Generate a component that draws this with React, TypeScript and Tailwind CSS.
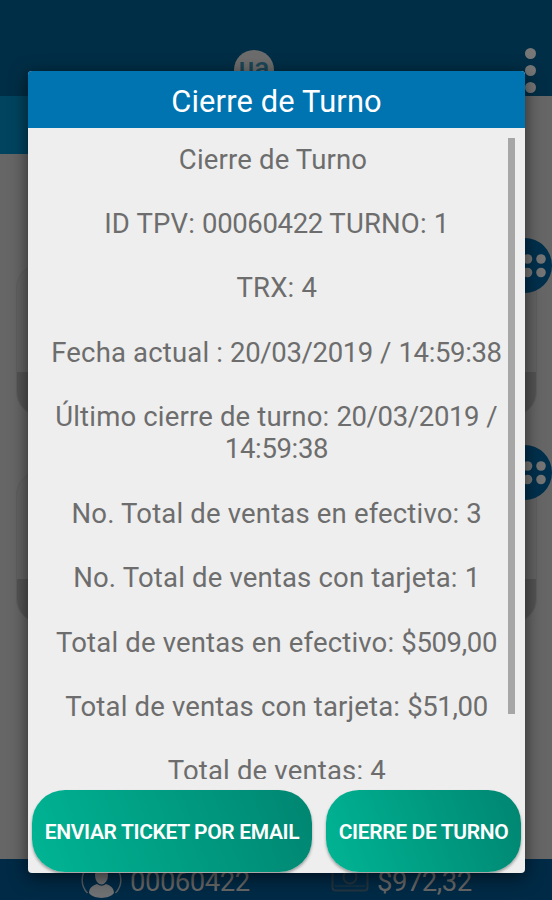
const lines = [
  "Cierre de Turno",
  "ID TPV: 00060422 TURNO: 1",
  "TRX: 4",
  "Fecha actual : 20/03/2019 / 14:59:38",
  "Último cierre de turno: 20/03/2019 / 14:59:38",
  "No. Total de ventas en efectivo: 3",
  "No. Total de ventas con tarjeta: 1",
  "Total de ventas en efectivo: $509,00",
  "Total de ventas con tarjeta: $51,00",
  "Total de ventas: 4",
];

// numbers are set a little tighter than the words around them
function Line({ text }: { text: string }) {
  return (
    <p className="tracking-[0.17px] first:-ml-[7px]">
      {text.split(/([$\d][\d/:,]*)/).map((part, i) =>
        i % 2 === 1 ? (
          <span key={i} className="tracking-[-0.35px]">
            {part}
          </span>
        ) : (
          part
        )
      )}
    </p>
  );
}

function Header() {
  return (
    <header className="relative h-24 shrink-0 bg-[#002e46]">
      <div className="absolute left-[234px] top-[50px] flex h-10 w-10 justify-center rounded-full bg-[#6c6c6c] pt-[4px] text-[28px] font-medium leading-[28px] text-[#1b4657]">
        ua
      </div>
      <div className="absolute right-[16px] top-[47.5px] flex flex-col gap-[5.5px]">
        <span className="h-[11.5px] w-[11.5px] rounded-full bg-[#777]" />
        <span className="h-[11.5px] w-[11.5px] rounded-full bg-[#777]" />
        <span className="h-[11.5px] w-[11.5px] rounded-full bg-[#777]" />
      </div>
    </header>
  );
}

function Card() {
  return (
    <div className="relative ml-4 mr-[15px] h-[152px]">
      <div className="flex h-full flex-col overflow-hidden rounded-[24px] border border-[#5f5f5f] bg-[#636363]">
        <div className="flex-1" />
        <div className="h-[43px] bg-[#545454]" />
      </div>
      <svg className="absolute -right-[15px] -top-[26px]" width="55" height="55" viewBox="0 0 55 55">
        <circle cx="27.5" cy="27.5" r="27.5" fill="#00304d" />
        <g fill="#757575">
          <circle cx="30.5" cy="21" r="4.8" />
          <circle cx="30.5" cy="34.5" r="4.8" />
          <circle cx="44" cy="21" r="4.8" />
          <circle cx="44" cy="34.5" r="4.8" />
        </g>
      </svg>
    </div>
  );
}

function Footer() {
  return (
    <footer className="flex h-[41px] shrink-0 items-end bg-[#002a46] text-[27.5px] leading-[32px] tracking-[-0.5px] text-[#666]">
      <svg className="ml-[81px] shrink-0" width="41" height="41" viewBox="0 0 41 41">
        <path d="M6.500 9a18.500 18.500 0 0 0 0 26M34.500 9a18.500 18.500 0 0 1 0 26" transform="translate(0 -1)" fill="none" stroke="#555d63" strokeWidth="1.5" />
        <ellipse cx="20.5" cy="16" rx="6.500" ry="9.500" fill="#707173" />
        <path d="M8 34c0-6 5-8 8-9q4.500 3.500 9 0c3 1 8 3 8 9-5 6.500-20 6.500-25 0z" fill="#707173" />
      </svg>
      <span className="mb-[2px] ml-[8px] w-[120px]">00060422</span>
      <svg className="mb-[7px] ml-[81px] shrink-0" width="38" height="26" viewBox="0 0 38 26" fill="none" stroke="#24343f" strokeWidth="2">
        <rect x="1.500" y="1.500" width="35" height="22" rx="3" />
        <circle cx="19" cy="10" r="6.500" />
        <path d="M4 19h30" strokeWidth="1" />
      </svg>
      <span className="mb-[2px] ml-[8px]">$972,32</span>
    </footer>
  );
}

function TurnoDialog() {
  return (
    <div className="absolute left-7 top-[71px] flex h-[802px] w-[497px] flex-col overflow-hidden rounded-[4px] bg-[#eee] shadow-[0_4px_18px_rgba(0,0,0,0.6)]">
      <h1 className="h-[56.5px] shrink-0 bg-[#0073b1] pt-[13px] text-center text-[30.8px] leading-[36px] tracking-[0.17px] text-white">
        Cierre de Turno
      </h1>
      <div className="relative mt-[10.5px] h-[641px] overflow-hidden pt-[5.6px]">
        <div className="flex flex-col gap-[32.2px] px-5 text-center text-[27.5px] leading-[32.2px] text-[#6d6d6d]">
          {lines.map((line) => (
            <Line key={line} text={line} />
          ))}
        </div>
        <div className="absolute right-[10px] top-0 h-[576px] w-[7px] bg-[#a6a6a6]" />
      </div>
      <div className="mt-[11px] flex gap-[14px] pl-1 text-[21px] font-semibold tracking-[-0.35px] text-white">
        <button className="h-[82px] w-[280px] whitespace-nowrap rounded-[33px] bg-linear-[70deg] from-[#00b594] to-[#008571] pt-[4px] shadow-[0_2px_3px_rgba(0,0,0,0.35)]">
          ENVIAR TICKET POR EMAIL
        </button>
        <button className="h-[82px] w-[195px] whitespace-nowrap rounded-[33px] bg-linear-[70deg] from-[#00b594] to-[#008571] pt-[4px] shadow-[0_2px_3px_rgba(0,0,0,0.35)]">
          CIERRE DE TURNO
        </button>
      </div>
    </div>
  );
}

export default function App() {
  return (
    <div className="relative flex h-[900px] w-[552px] flex-col overflow-hidden bg-[#666] font-[Roboto,sans-serif]">
      <Header />
      <div className="h-[58px] w-[270px] shrink-0 bg-[#00445f]" />
      <main className="flex flex-1 flex-col gap-[55px] pt-[110px]">
        <Card />
        <Card />
      </main>
      <Footer />
      <TurnoDialog />
    </div>
  );
}
